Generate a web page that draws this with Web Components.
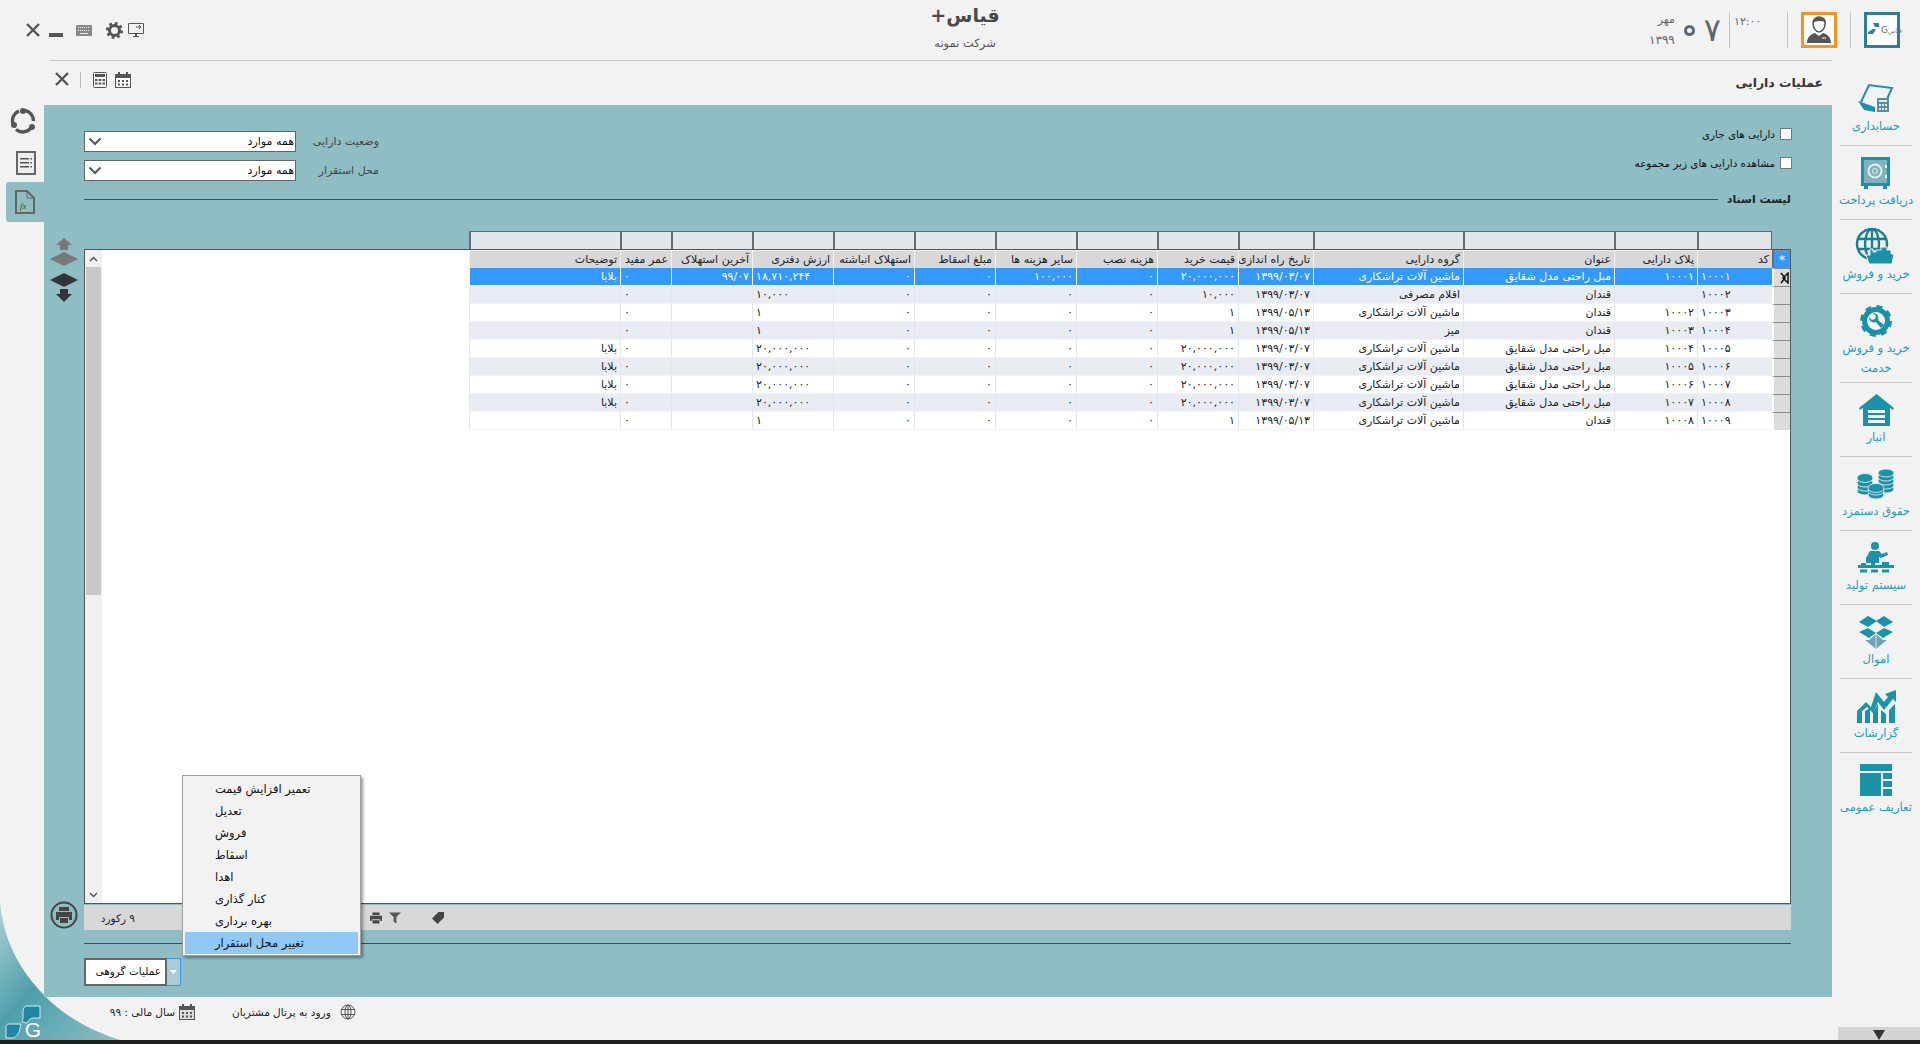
<!DOCTYPE html>
<html lang="fa">
<head>
<meta charset="utf-8">
<title>عملیات دارایی</title>
<style>
  html, body { margin: 0; padding: 0; background: #f2f2f2; }
  body { font-family: "DejaVu Sans", sans-serif; width: 1920px; height: 1044px; overflow: hidden; }
</style>
</head>
<body>
<erp-app>
  <erp-header slot="header"></erp-header>
  <erp-toolbar slot="toolbar"></erp-toolbar>
  <erp-rail slot="rail"></erp-rail>
  <asset-panel slot="panel"></asset-panel>
  <erp-nav slot="nav">
    <nav-item label="حسابداری"><svg viewBox="-2 0 38 34" width="38" height="34"><path d="M2 20 10 3l23 3-5 11" fill="none" stroke="#1a93a8" stroke-width="2"/><path d="M-1 19l17 6v5l-11-2z" fill="#1a93a8"/><rect x="18" y="16" width="12" height="14" fill="#5a8f98"/><path d="M20 18h8v2h-8zM20 22h2v2h-2zM23 22h2v2h-2zM26 22h2v2h-2zM20 26h2v2h-2zM23 26h2v2h-2zM26 26h2v2h-2z" fill="#dfe9ea"/></svg></nav-item>
    <nav-item label="دریافت پرداخت"><svg viewBox="0 0 30 32" width="30" height="32"><rect x="0" y="0" width="29" height="29" fill="#1a93a8"/><rect x="3" y="3" width="23" height="23" fill="#7fb3ba"/><circle cx="14" cy="14" r="6.5" fill="none" stroke="#e8eeef" stroke-width="2"/><circle cx="14" cy="14" r="2.5" fill="none" stroke="#e8eeef"/><path d="M3 29h4v3H3zM22 29h4v3h-4z" fill="#1a93a8"/><path d="M25 8v3M25 18v3" stroke="#e8eeef" stroke-width="2"/></svg></nav-item>
    <nav-item label="خرید و فروش"><svg viewBox="0 0 42 38" width="42" height="38"><g fill="none" stroke="#1a7f95" stroke-width="2.4"><circle cx="17" cy="16" r="15"/><ellipse cx="17" cy="16" rx="7" ry="15"/><path d="M2 11h30M2 21h30M17 1v30"/></g><path d="M14 36l-3-9h4v-6h3v3h3v-2h5v-3h6v3h4v4h3l-2 10z" fill="#1a93a8" stroke="#f2f2f2"/></svg></nav-item>
    <nav-item label="خرید و فروش&#10;خدمت"><svg viewBox="0 0 32 32" width="32" height="32"><circle cx="16" cy="16" r="11.5" fill="none" stroke="#1a93a8" stroke-width="5"/><circle cx="16" cy="16" r="13.5" fill="none" stroke="#1a93a8" stroke-width="5" stroke-dasharray="5.6 5"/><circle cx="16" cy="16" r="8.5" fill="#f4f4f4"/><path d="M9 12a5 5 0 0 0 7 5l5 6 3-3-6-5a5 5 0 0 0-5-7l3 3-1 3-3 1z" fill="#1a93a8"/></svg></nav-item>
    <nav-item label="انبار"><svg viewBox="0 0 35 32" width="35" height="32"><path d="M17.500 0 35 14l-1 2-3-2v18H4V14l-3 2-1-2z" fill="#1a93a8"/><path d="M9 16h17v3H9zM9 21h17v3H9zM9 26h17v3H9z" fill="#f2f2f2"/></svg></nav-item>
    <nav-item label="حقوق دستمزد"><svg viewBox="0 0 38 32" width="38" height="32"><g fill="#1a93a8" stroke="#f2f2f2" stroke-width=".8"><ellipse cx="29" cy="21" rx="8" ry="4"/><ellipse cx="29" cy="17" rx="8" ry="4"/><ellipse cx="29" cy="13" rx="8" ry="4"/><ellipse cx="29" cy="9" rx="8" ry="4"/><ellipse cx="29" cy="5" rx="8" ry="4"/><ellipse cx="8" cy="23" rx="8" ry="4"/><ellipse cx="8" cy="19" rx="8" ry="4"/><ellipse cx="8" cy="15" rx="8" ry="4"/><ellipse cx="8" cy="10" rx="8" ry="4.500"/><ellipse cx="19" cy="27" rx="8" ry="4"/><ellipse cx="19" cy="23" rx="8" ry="4"/><ellipse cx="19" cy="20" rx="8" ry="4.500"/></g></svg></nav-item>
    <nav-item label="سیستم تولید"><svg viewBox="0 0 36 33" width="36" height="33"><circle cx="17" cy="4" r="4" fill="#1a93a8"/><path d="M12 9h9l3 3 5-2 1 3-7 3-2-1v6H8v-5z" fill="#1a93a8"/><path d="M0 23h36v3H0z" fill="#1a93a8"/><path d="M3 21h5v2H3zM13 20h4v3h-4zM24 20h7v3h-7z" fill="#1a93a8"/><path d="M2 29h32" stroke="#1a93a8" stroke-width="3" stroke-dasharray="7 4"/></svg></nav-item>
    <nav-item label="اموال"><svg viewBox="0 0 36 33" width="36" height="33"><path d="M10 0 19 5 10 11 1 6zM26 0 35 6 26 11 18 5zM10 12l8 5-7 5-10-6zM26 12l9 4-10 6-7-5z" fill="#1a93a8"/><path d="M7 24l11 9 11-9-4 0-7-6-7 6z" fill="#6fa6ad"/><path d="M18 18v15" stroke="#d8e4e6"/></svg></nav-item>
    <nav-item label="گزارشات"><svg viewBox="0 0 39 33" width="39" height="33"><path d="M0 21 9 12l5 5L19 2l8 10 4-5-3-3 11-4v12l-3-3-9 11-6-8-5 11-6-6-11 9z" fill="#1a93a8"/><path d="M0 25l5-4v12H0zM8 21l5-3v15H8zM16 22l5-8v19h-5zM24 20l5 4v9h-5zM32 20l6-6v19h-6z" fill="#1a93a8"/></svg></nav-item>
    <nav-item label="تعاریف عمومی"><svg viewBox="0 0 32 32" width="32" height="32"><path d="M0 0h32v7H0zM0 9h21v23H0zM23 9h9v6h-9zM23 17h9v6h-9zM23 25h9v7h-9z" fill="#1a93a8"/></svg></nav-item>
  </erp-nav>
  <erp-status slot="status"></erp-status>
</erp-app>

<script>
// Marco general de la pagina: cabecera, barra, carril, panel y menu derecho
class ErpApp extends HTMLElement {
  constructor() {
    super();
    this.attachShadow({ mode: 'open' });
    this.shadowRoot.innerHTML = `
      <style>
        :host { display: grid; position: relative; width: 1920px; height: 1044px; overflow: hidden;
          grid-template-columns: 44px 1788px 88px; grid-template-rows: 60px 45px 892px 43px 4px; }
        .hd { grid-column: 1 / 4; grid-row: 1; }
        .tb { grid-column: 1 / 3; grid-row: 2; }
        .ra { grid-column: 1; grid-row: 3; }
        .pa { grid-column: 2; grid-row: 3; }
        .na { grid-column: 3; grid-row: 2 / 5; }
        .st { grid-column: 1 / 3; grid-row: 4; }
        .strip { grid-column: 1 / 4; grid-row: 5; background: #1f1f1f; position: relative; z-index: 2; }
        .corner { position: absolute; left: 0; top: 890px; }
        .logo { position: absolute; left: 5px; top: 1004px; width: 36px; height: 36px; overflow: hidden; }
        .logo b { position: absolute; right: 0; bottom: 0; color: #fff; font: 21px/21px "Liberation Sans", sans-serif; }
        .hd, .tb, .ra, .pa, .na, .st { position: relative; min-width: 0; }
      </style>
      <svg class="corner" width="150" height="150" viewBox="0 0 150 150">
        <defs><linearGradient id="c" x1="0" y1="0" x2="1" y2="1">
          <stop offset="0" stop-color="#b0d2d5"/><stop offset=".45" stop-color="#4f9fab"/><stop offset="1" stop-color="#8ebec3"/>
        </linearGradient></defs>
        <path d="M0 13C4 50 18 78 44 105 62 124 88 140 120 150H0z" fill="url(#c)"/>
      </svg>
      <div class="hd"><slot name="header"></slot></div>
      <div class="tb"><slot name="toolbar"></slot></div>
      <div class="ra"><slot name="rail"></slot></div>
      <div class="pa"><slot name="panel"></slot></div>
      <div class="na"><slot name="nav"></slot></div>
      <div class="st"><slot name="status"></slot></div>
      <div class="strip"></div>
      <div class="logo">
        <svg width="36" height="36" viewBox="0 0 36 36">
          <path d="M22 2h13v12h-6c-4 0-5 2-7 5l-5-1c1-2 1-4 1-9 0-4 1-7 4-7z" fill="#1f87a3" stroke="#d6ebf0"/>
          <path d="M4 20h12c-1 6-3 14-9 14H1V23c0-2 1-3 3-3z" fill="#1f87a3" stroke="#d6ebf0"/>
        </svg>
        <b>G</b>
      </div>`;
  }
}
customElements.define('erp-app', ErpApp);

// Cabecera superior
class ErpHeader extends HTMLElement {
  constructor() {
    super();
    this.attachShadow({ mode: 'open' });
    this.shadowRoot.innerHTML = `
      <style>
        :host { display: grid; grid-template-columns: 1fr auto 1fr; height: 60px; color: #555; }
        .l { display: flex; align-items: center; padding-left: 25px; height: 60px; }
        .c { text-align: center; padding-left: 10px; direction: rtl; }
        .c h1 { margin: 3px 0 0; font-size: 19px; line-height: 24px; color: #4a4a4a; font-weight: bold; }
        .c p { margin: 8px 0 0; font-size: 11.500px; line-height: 16px; color: #555; }
        .r { display: flex; justify-content: flex-end; padding: 12px 20px 0 0; }
        .sep { width: 1px; height: 36px; background: #c4c4c4; }
        .box { width: 36px; height: 36px; box-sizing: border-box; background: #fff; margin: 0 13px; }
        .box.av { border: 3px solid #f7941d; }
        .box.lg { border: 3px solid #2e7f9b; margin-right: 0; display: flex; align-items: center; font-size: 6px; color: #777; }
        .lg svg { flex: none; }
        .date { display: flex; align-items: center; height: 36px; margin-right: 8px; color: #5c6670; }
        .my { text-align: right; font-size: 11px; line-height: 20px; width: 38px; margin-right: 9px; white-space: nowrap; }
        .my span { letter-spacing: 4px; font-size: 12px; }
        .big { font-size: 32px; line-height: 36px; display: flex; align-items: center; gap: 9px; direction: ltr; }
        .z { display: inline-block; width: 11px; height: 11px; box-sizing: border-box; border: 3px solid #5c6670; border-radius: 50%;
             color: transparent; font-size: 8px; line-height: 5px; overflow: hidden; }
        .time { width: 53px; padding-left: 4px; font-size: 11px; letter-spacing: 2px; line-height: 20px; color: #5c6670; }
      </style>
      <div class="l">
        <svg width="16" height="16" viewBox="0 0 16 16"><path d="M2 2l12 12M14 2 2 14" stroke="#555" stroke-width="2.400"/></svg>
        <svg style="margin:10px 0 0 8px" width="14" height="4"><rect width="14" height="4" fill="#555"/></svg>
        <svg style="margin-left:13px" width="16" height="11" viewBox="0 0 16 11"><rect width="16" height="11" rx="1" fill="#888"/><path d="M2 2.500h12M2 5.500h12" stroke="#eee" stroke-dasharray="1 1"/><path d="M4 8.500h8" stroke="#eee"/></svg>
        <svg style="margin-left:14px" width="17" height="17" viewBox="0 0 17 17"><circle cx="8.500" cy="8.500" r="5" fill="none" stroke="#555" stroke-width="3"/><circle cx="8.500" cy="8.500" r="7" fill="none" stroke="#555" stroke-width="3" stroke-dasharray="2.700 2.800"/></svg>
        <svg style="margin-left:5px" width="16" height="15" viewBox="0 0 16 15"><path d="M.5.5h15v10H.5z" fill="none" stroke="#555"/><path d="M8 4h5M11 2l2 2-2 2" fill="none" stroke="#555"/><path d="M7 11h2v2h2v1H5v-1h2z" fill="#555"/></svg>
      </div>
      <div class="c"><h1>قیاس+</h1><p>شرکت نمونه</p></div>
      <div class="r">
        <div class="date">
          <div class="my" dir="rtl">مهر<br><span>۱۳۹۹</span></div>
          <div class="big"><span class="z">۰</span><span>۷</span></div>
        </div>
        <div class="sep"></div>
        <div class="time">۱۲:۰۰</div>
        <div class="sep"></div>
        <div class="box av"><svg width="30" height="30" viewBox="0 0 30 30"><path d="M9 8c0-4 3-6 6-6s7 2 6 7c0 4-3 8-6 8S9 13 9 8z" fill="none" stroke="#555" stroke-width="1.500"/><path d="M9 8c2-2 8-3 12-1l-1-3-5-2-5 2z" fill="#555"/><path d="M3 28c0-6 4-9 8-10l4 3 4-3c4 1 8 4 8 10z" fill="#555"/><path d="M18 23h4" stroke="#fff"/></svg></div>
        <div class="sep"></div>
        <div class="box lg"><svg width="14" height="16" viewBox="0 0 14 16"><path d="M6 1h6v4H8zM1 10l5-3h3l-3 5H1z" fill="#1f87a3"/></svg><span style="color:#666;font-size:9px">G</span><span dir="rtl">قیاس</span></div>
      </div>`;
  }
}
customElements.define('erp-header', ErpHeader);

// Barra con el titulo de la pagina
class ErpToolbar extends HTMLElement {
  constructor() {
    super();
    this.attachShadow({ mode: 'open' });
    this.shadowRoot.innerHTML = `
      <style>
        :host { display: flex; align-items: flex-start; box-sizing: border-box; height: 45px; margin-left: 50px;
          border-top: 1px solid #c8c8c8; padding: 11px 9px 0 5px; }
        .sep { width: 1px; height: 16px; background: #bbb; margin: 0 12px 0 11px; }
        h2 { margin: 0 0 0 auto; font-size: 12.400px; font-weight: bold; color: #333; direction: rtl; line-height: 20px; padding-top: 1px; }
        svg { display: block; }
      </style>
      <svg width="14" height="14" viewBox="0 0 14 14"><path d="M1 1l12 12M13 1 1 13" stroke="#555" stroke-width="2.400"/></svg>
      <div class="sep"></div>
      <svg width="14" height="16" viewBox="0 0 14 16"><rect x=".5" y=".5" width="13" height="15" rx="1" fill="none" stroke="#555"/><path d="M2 2h10v3H2zM2 7h2.500v2H2zM5.700 7h2.500v2H5.700zM9.500 7H12v2H9.500zM2 10.500h2.500v2H2zM5.700 10.500h2.500v2H5.700zM9.500 10.500H12v2H9.500z" fill="#555"/></svg>
      <svg style="margin-left:8px" width="16" height="16" viewBox="0 0 16 16"><rect x=".5" y="2.500" width="15" height="13" fill="#fff" stroke="#555"/><path d="M1 3h14v3H1zM3 0h2v3H3zM11 0h2v3h-2z" fill="#555"/><path d="M3 8h2v2H3zM7 8h2v2H7zM11 8h2v2h-2zM3 11.500h2v2H3zM7 11.500h2v2H7zM11 11.500h2v2h-2z" fill="#555"/></svg>
      <h2>عملیات دارایی</h2>`;
  }
}
customElements.define('erp-toolbar', ErpToolbar);

// Carril izquierdo con las pestañas
class ErpRail extends HTMLElement {
  constructor() {
    super();
    this.attachShadow({ mode: 'open' });
    this.shadowRoot.innerHTML = `
      <style>
        :host { display: flex; flex-direction: column; align-items: flex-start; padding-top: 3px; }
        svg { display: block; }
        .tab { width: 38px; height: 40px; margin: 7px 0 0 6px; background: #8ebec3; border-radius: 3px 0 0 3px;
          display: flex; align-items: center; justify-content: center; }
      </style>
      <svg style="margin-left:10px" width="26" height="26" viewBox="0 0 26 26"><g fill="none" stroke="#555" stroke-width="3.400"><path d="M3 16A10.500 10.500 0 0 1 9 3"/><path d="M15 2.500A10.500 10.500 0 0 1 23.500 13"/><path d="M21 20A10.500 10.500 0 0 1 6 21.500"/></g><circle cx="4" cy="17" r="3" fill="#555"/><circle cx="13" cy="3" r="3" fill="#555"/><circle cx="22" cy="19" r="3" fill="#555"/></svg>
      <svg style="margin:17px 0 0 16px" width="20" height="24" viewBox="0 0 20 24"><rect x="1" y="1" width="18" height="22" fill="#eee" stroke="#666" stroke-width="2"/><path d="M4 7h9v1.500H4zM4 11h9v1.500H4zM4 15h9v1.500H4zM14.500 7H16v1.500h-1.500zM14.500 11H16v1.500h-1.500zM14.500 15H16v1.500h-1.500z" fill="#555"/></svg>
      <div class="tab"><svg width="20" height="24" viewBox="0 0 20 24"><path d="M1 1h11l7 7v15H1z" fill="none" stroke="#666" stroke-width="2"/><path d="M12 1v7h7" fill="none" stroke="#666"/><text x="5" y="19" font-family="Liberation Serif" font-style="italic" font-size="9" fill="#444">fx</text></svg></div>`;
  }
}
customElements.define('erp-rail', ErpRail);

// Panel central con filtros, grilla y acciones
class AssetPanel extends HTMLElement {
  constructor() {
    super();
    this.attachShadow({ mode: 'open' });
    this.shadowRoot.innerHTML = `
      <style>
        :host { display: block; position: relative; height: 892px; background: #8ebec3; box-sizing: border-box; padding-right: 41px; direction: ltr; }
        .filters { display: flex; justify-content: space-between; height: 85px; box-sizing: border-box; padding: 22px 0 0 40px; }
        .sels { padding-top: 4px; display: grid; grid-template-columns: 212px 83px; grid-auto-rows: 21px; row-gap: 8px; align-content: start; }
        .lab { font-size: 11px; line-height: 21px; text-align: right; color: #444; direction: rtl; }
        .sel { height: 21px; box-sizing: border-box; border: 1px solid #666; background: #fff; display: flex; justify-content: space-between;
          align-items: center; padding: 0 1px 0 3px; font-size: 11px; color: #111; direction: ltr; }
        .checks { display: flex; flex-direction: column; gap: 15px; margin-right: -1px; }
        .chk { display: flex; justify-content: flex-end; align-items: center; height: 14px; gap: 5px; font-size: 10.400px; color: #111; }
        .chk i { width: 10px; height: 10px; border: 1px solid #777; background: #fff; display: block; }
        .title { display: flex; align-items: center; height: 18px; margin-left: 40px; gap: 9px; }
        .title hr, .rule { flex: 1; height: 1px; border: 0; background: #3f5055; margin: 0; }
        .title b { font-size: 11px; color: #222; direction: rtl; }
        .gridrow { display: flex; margin-top: 23px; margin-left: 6px; }
        .arrows { width: 34px; display: flex; flex-direction: column; justify-content: space-between; align-items: center; height: 699px; padding-right: 6px; box-sizing: border-box; padding-top: 7px; }
        .rule { margin: 13px 0 0 40px; }
        .btn { display: flex; margin: 14px 0 0 40px; height: 28px; font-size: 10.500px; }
        .btn span { width: 83px; box-sizing: border-box; border: 2px solid #666; background: #fff; line-height: 23px; color: #111; text-align: right; padding-right: 4px; direction: rtl; }
        .btn i { width: 14px; box-sizing: border-box; border: 1px solid #3399ff; border-left: 0; background: #a9cdd2; display: flex; align-items: center; justify-content: center; }
        svg { display: block; }
        pop-menu { position: absolute; left: 138px; top: 670px; }
      </style>
      <div class="filters">
        <div class="sels">
          <div class="sel"><svg width="14" height="9" viewBox="0 0 14 9"><path d="M1.500 1.500 7 7l5.500-5.500" fill="none" stroke="#555" stroke-width="2"/></svg><span dir="rtl">همه موارد</span></div>
          <div class="lab">وضعیت دارایی</div>
          <div class="sel"><svg width="14" height="9" viewBox="0 0 14 9"><path d="M1.500 1.500 7 7l5.500-5.500" fill="none" stroke="#555" stroke-width="2"/></svg><span dir="rtl">همه موارد</span></div>
          <div class="lab">محل استقرار</div>
        </div>
        <div class="checks">
          <div class="chk"><span dir="rtl">دارایی های جاری</span><i></i></div>
          <div class="chk"><span dir="rtl">مشاهده دارایی های زیر مجموعه</span><i></i></div>
        </div>
      </div>
      <div class="title"><hr><b>لیست اسناد</b></div>
      <div class="gridrow">
        <div class="arrows">
          <svg width="28" height="64" viewBox="0 0 28 64"><path d="M14 0l8 7h-4v5h-8V7H6z" fill="#777"/><path d="M14 14l14 7-14 7L0 21z" fill="#777"/><path d="M14 35l14 7-14 7L0 42z" fill="#333"/><path d="M10 51h8v5h4l-8 8-8-8h4z" fill="#333"/></svg>
          <svg style="margin-bottom:1px" width="28" height="28" viewBox="0 0 28 28"><circle cx="14" cy="14" r="12.500" fill="none" stroke="#444" stroke-width="2"/><path d="M9 6h10v4H9zM6 11h16v8h-3v-3H9v3H6zM10 17h8v5h-8z" fill="#444"/></svg>
        </div>
        <data-grid></data-grid>
      </div>
      <hr class="rule" style="flex:none;display:block">
      <div class="btn"><span>عملیات گروهی</span><i><svg width="7" height="4"><path d="M0 0h7L3.500 4z" fill="#fff"/></svg></i></div>
      <pop-menu></pop-menu>`;
  }
}
customElements.define('asset-panel', AssetPanel);

// Grilla de datos; las filas salen de ROWS
const WIDTHS = [18, 75, 83, 151, 150, 75, 81, 81, 81, 81, 81, 81, 81, 51, 151];
const HEADS = ['کد', 'پلاک دارایی', 'عنوان', 'گروه دارایی', 'تاریخ راه اندازی', 'قیمت خرید', 'هزینه نصب', 'سایر هزینه ها', 'مبلغ اسقاط', 'استهلاک انباشته', 'ارزش دفتری', 'آخرین استهلاک', 'عمر مفید', 'توضیحات'];
const MBL = 'مبل راحتی مدل شقایق', GLD = 'قندان', MSH = 'ماشین آلات تراشکاری';
const D1 = '۱۳۹۹/۰۳/۰۷', D2 = '۱۳۹۹/۰۵/۱۳', P = '۲۰,۰۰۰,۰۰۰', Z = '۰', N = 'بلابا';
const ROWS = [
  ['۱۰۰۰۱', '۱۰۰۰۱', MBL, MSH, D1, P, Z, '۱۰۰,۰۰۰', Z, Z, '۱۸,۷۱۰,۲۴۴', '۹۹/۰۷', Z, N],
  ['۱۰۰۰۲', '', GLD, 'اقلام مصرفی', D1, '۱۰,۰۰۰', Z, Z, Z, Z, '۱۰,۰۰۰', '', Z, ''],
  ['۱۰۰۰۳', '۱۰۰۰۲', GLD, MSH, D2, '۱', Z, Z, Z, Z, '۱', '', Z, ''],
  ['۱۰۰۰۴', '۱۰۰۰۳', GLD, 'میز', D2, '۱', Z, Z, Z, Z, '۱', '', Z, ''],
  ['۱۰۰۰۵', '۱۰۰۰۴', MBL, MSH, D1, P, Z, Z, Z, Z, P, '', Z, N],
  ['۱۰۰۰۶', '۱۰۰۰۵', MBL, MSH, D1, P, Z, Z, Z, Z, P, '', Z, N],
  ['۱۰۰۰۷', '۱۰۰۰۶', MBL, MSH, D1, P, Z, Z, Z, Z, P, '', Z, N],
  ['۱۰۰۰۸', '۱۰۰۰۷', MBL, MSH, D1, P, Z, Z, Z, Z, P, '', Z, N],
  ['۱۰۰۰۹', '۱۰۰۰۸', GLD, MSH, D2, '۱', Z, Z, Z, Z, '۱', '', Z, '']
];
// columnas alineadas a la izquierda: codigo, valor en libros, vida util
const LEFT = new Set([0, 10, 12]);

class DataGrid extends HTMLElement {
  constructor() {
    super();
    this.attachShadow({ mode: 'open' });
    const cols = WIDTHS.map(w => `<col style="width:${w}px">`).join('');
    const groupCols = WIDTHS.slice(1).map(w => `<col style="width:${w}px">`).join('');
    const body = ROWS.map((r, i) => `
      <tr class="${i === 0 ? 'sel' : i % 2 ? 'alt' : ''}">
        <th class="rh">${i === 0 ? '<svg width="9" height="12" viewBox="0 0 9 12"><path d="M1 1l4 5-4 5" fill="none" stroke="#111" stroke-width="1.500"/><path d="M8 1 3 6l5 5z" fill="none" stroke="#111" stroke-width="1.500"/></svg>' : ''}</th>
        ${r.map((v, c) => `<td class="${LEFT.has(c) ? 'lf' : ''}">${v}</td>`).join('')}
      </tr>`).join('');
    this.shadowRoot.innerHTML = `
      <style>
        :host { display: flex; flex-direction: column; width: 1707px; height: 699px; font-size: 11px; color: #222; }
        .band { height: 18px; display: flex; justify-content: flex-end; padding-right: 19px; box-sizing: border-box; }
        .band table { width: 1303px; height: 19px; background: #e1e7ea; direction: rtl; }
        .band td { border: 1px solid #6a6a6a; border-width: 1px 0 0 2px; padding: 0; }
        .band td:first-child { border-right: 1px solid #6a6a6a; }
        .box { height: 656px; box-sizing: border-box; background: #fff; border: 1px solid #555; display: flex; justify-content: space-between; }
        .scroll { width: 17px; background: #f0f0f0; display: flex; flex-direction: column; }
        .scroll b { height: 17px; display: flex; align-items: center; justify-content: center; }
        .scroll i { display: block; height: 328px; width: 15px; margin: 0 1px; background: #c8c8c8; }
        .scroll span { flex: 1; }
        table { border-collapse: separate; border-spacing: 0; table-layout: fixed; width: max-content; }
        .main { direction: rtl; align-self: flex-start; width: 1321px; }
        th, td { padding: 0 3px; height: 18px; box-sizing: border-box; white-space: nowrap; overflow: hidden; font-weight: normal; text-align: right; line-height: 16px; }
        thead th { background: #d8d8d8; border-left: 1px solid #f2f2f2; border-top: 1px solid #eee; }
        .rh { background: #dcdcdc; padding: 0 1px; border-top: 1px solid #8a8a8a; border-left: 2px solid #fff; text-align: center; }
        .rh svg { display: block; margin: 0; }
        thead .rh { background: #3399ff; color: #fff; font-size: 12px; border-left: 2px solid #6a6a6a; }
        td { border-left: 1px solid #e3e7ec; border-bottom: 1px solid #f3f3f3; color: #222; }
        .lf { text-align: left; }
        .alt td { background: #e9edf3; }
        .sel td { background: #3399ff; color: #fff; border-left-color: #fff; }
        .foot { height: 25px; margin-top: 1px; background: #d8d8d8; display: flex; align-items: center; padding-left: 19px; color: #222; font-size: 10.500px; }
        .foot svg { display: block; }
      </style>
      <div class="band"><table><colgroup>${groupCols}</colgroup><tr>${HEADS.map(() => '<td></td>').join('')}</tr></table></div>
      <div class="box">
        <div class="scroll">
          <b><svg width="9" height="6"><path d="M1 5l3.500-3.500L8 5" fill="none" stroke="#555" stroke-width="1.500"/></svg></b>
          <i></i><span></span>
          <b><svg width="9" height="6"><path d="M1 1l3.500 3.500L8 1" fill="none" stroke="#555" stroke-width="1.500"/></svg></b>
        </div>
        <table class="main">
          <colgroup>${cols}</colgroup>
          <thead><tr><th class="rh">*</th>${HEADS.map(h => `<th>${h}</th>`).join('')}</tr></thead>
          <tbody>${body}</tbody>
        </table>
      </div>
      <div class="foot">
        <span dir="rtl" style="width:32px;white-space:nowrap">۹ رکورد</span>
        <svg style="margin-left:235px" width="12" height="12" viewBox="0 0 14 13"><path d="M3 0h8v3H3zM0 4h14v6h-2V8H2v2H0zM3 9h8v4H3z" fill="#444"/></svg>
        <svg style="margin-left:7px" width="12" height="12" viewBox="0 0 13 12"><path d="M0 0h13L8 5v7L5 10V5z" fill="#555"/></svg>
        <svg style="margin-left:31px" width="12" height="12" viewBox="0 0 13 13"><path d="M7 0h6v6l-7 7-6-6z" fill="#444"/></svg>
      </div>`;
  }
}
customElements.define('data-grid', DataGrid);

// Menu emergente de operaciones
class PopMenu extends HTMLElement {
  constructor() {
    super();
    this.attachShadow({ mode: 'open' });
    const items = ['تعمیر افزایش قیمت', 'تعدیل', 'فروش', 'اسقاط', 'اهدا', 'کنار گذاری', 'بهره برداری', 'تغییر محل استقرار'];
    this.shadowRoot.innerHTML = `
      <style>
        :host { display: block; width: 179px; box-sizing: border-box; background: #f2f2f2; border: 1px solid #a0a0a0;
          box-shadow: 2px 2px 3px rgba(0,0,0,.4); padding: 2px 2px 1px; font-size: 11.500px; color: #111; }
        div { height: 22px; line-height: 23px; padding-left: 30px; text-align: left; }
        div span { unicode-bidi: isolate; }
        .on { background: #90c8f6; }
      </style>
      ${items.map((t, i) => `<div class="${i === 7 ? 'on' : ''}"><span dir="rtl">${t}</span></div>`).join('')}`;
  }
}
customElements.define('pop-menu', PopMenu);

// Menu lateral derecho
class ErpNav extends HTMLElement {
  constructor() {
    super();
    this.attachShadow({ mode: 'open' });
    this.shadowRoot.innerHTML = `
      <style>
        :host { display: flex; flex-direction: column; height: 980px; box-sizing: border-box; }
        .list { flex: 1; }
        .down { height: 13px; margin-left: 6px; background: #d3d3d3; display: flex; justify-content: center; align-items: flex-end; }
        .down svg { display: block; }
      </style>
      <div class="list"><slot></slot></div>
      <div class="down"><svg width="12" height="10"><path d="M0 0h12L6 10z" fill="#333"/></svg></div>`;
  }
}
customElements.define('erp-nav', ErpNav);

class NavItem extends HTMLElement {
  constructor() {
    super();
    this.attachShadow({ mode: 'open' });
    this.shadowRoot.innerHTML = `
      <style>
        :host { display: block; margin: 0 8px; box-sizing: border-box; padding-top: 11px; min-height: 74px; border-bottom: 1px solid #c8c8c8; text-align: center; }
        :host(:first-child) { margin-top: 12px; }
        :host(:last-child) { border-bottom: 0; }
        .ic { height: 32px; display: flex; justify-content: center; align-items: center; }
        .lb { margin: 1px -8px 0; font-size: 11.500px; line-height: 20px; color: #17a0b6; direction: rtl; padding-bottom: 4px; white-space: pre-line; }
      </style>
      <div class="ic"><slot></slot></div>
      <div class="lb">${this.getAttribute('label')}</div>`;
  }
}
customElements.define('nav-item', NavItem);

// Barra inferior
class ErpStatus extends HTMLElement {
  constructor() {
    super();
    this.attachShadow({ mode: 'open' });
    this.shadowRoot.innerHTML = `
      <style>
        :host { display: flex; align-items: center; height: 30px; padding-left: 110px; font-size: 10.500px; color: #222; }
        span { white-space: nowrap; }
        svg { display: block; }
      </style>
      <span dir="rtl" style="width:65px;text-align:left">سال مالی : ۹۹</span>
      <svg style="margin-left:4px" width="16" height="16" viewBox="0 0 16 16"><rect x=".5" y="2.500" width="15" height="13" fill="#ddd" stroke="#555"/><path d="M1 3h14v3H1zM3 0h2v3H3zM11 0h2v3h-2z" fill="#555"/><path d="M3 8h2v2H3zM7 8h2v2H7zM11 8h2v2h-2zM3 11.500h2v2H3zM7 11.500h2v2H7zM11 11.500h2v2h-2z" fill="#555"/></svg>
      <span dir="rtl" style="margin-left:37px;width:103px;text-align:left">ورود به پرتال مشتریان</span>
      <svg style="margin-left:5px" width="16" height="16" viewBox="0 0 16 16"><g fill="none" stroke="#555"><circle cx="8" cy="8" r="7"/><ellipse cx="8" cy="8" rx="3" ry="7"/><path d="M1 5.500h14M1 10.500h14M8 1v14"/></g></svg>`;
  }
}
customElements.define('erp-status', ErpStatus);
</script>
</body>
</html>
